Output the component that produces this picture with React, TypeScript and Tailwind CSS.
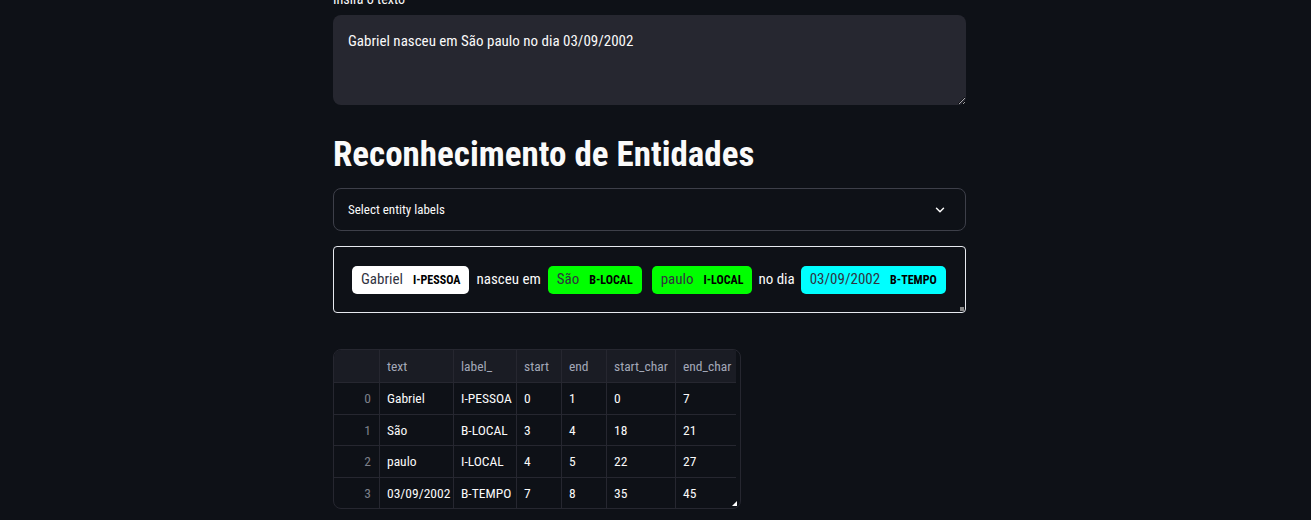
import { ChevronDown } from 'lucide-react';

const rows = [
  { i: 0, text: 'Gabriel', label: 'I-PESSOA', start: 0, end: 1, sc: 0, ec: 7 },
  { i: 1, text: 'São', label: 'B-LOCAL', start: 3, end: 4, sc: 18, ec: 21 },
  { i: 2, text: 'paulo', label: 'I-LOCAL', start: 4, end: 5, sc: 22, ec: 27 },
  { i: 3, text: '03/09/2002', label: 'B-TEMPO', start: 7, end: 8, sc: 35, ec: 45 },
];

function Mark({ text, label, color }: { text: string; label: string; color: string }) {
  return (
    <span className={`inline-flex h-[28px] shrink-0 items-center whitespace-nowrap rounded-[5px] px-[9px] ${color}`}>
      <span className="text-[15px] text-[#31333f]">{text}</span>
      <span className="ml-[10px] text-[12px] font-bold text-black">{label}</span>
    </span>
  );
}

export default function App() {
  const cols = ['w-[46px]', 'w-[74px]', 'w-[63px]', 'w-[45px]', 'w-[45px]', 'w-[69px]', 'w-[60px]'];

  return (
    <div className="h-[520px] overflow-hidden bg-[#0e1117] font-['Roboto_Condensed',sans-serif] text-[#fafafa]">
      <div className="mx-auto w-[645px] pr-[12px]">
        {/* text input */}
        <div className="-mt-[11px]">
          <div className="mb-[6px] text-[14px] leading-[20px]">Insira o texto</div>
          <textarea
            className="block h-[90px] w-full rounded-lg bg-[#262730] px-[15px] pt-[14px] text-[15px] leading-[24px] text-[#fafafa] outline-none"
            defaultValue="Gabriel nasceu em São paulo no dia 03/09/2002"
          />
        </div>

        <h2 className="mt-[28px] text-[35px] font-bold leading-[44px]">Reconhecimento de Entidades</h2>

        {/* select */}
        <div className="mt-[11px] flex h-[43px] items-center justify-between rounded-lg border border-[#3d3f49] pl-[14px] pr-[18px]">
          <span className="text-[13px]">Select entity labels</span>
          <ChevronDown className="h-[14px] w-[14px]" strokeWidth={2.5} />
        </div>

        {/* entities */}
        <div className="relative mt-[15px] flex h-[67px] items-center whitespace-nowrap rounded-[4px] border border-[#e6e9ef] pl-[18px] text-[15px]">
          <Mark text="Gabriel" label="I-PESSOA" color="bg-white" />
          <span className="mx-[7px]">nasceu em</span>
          <Mark text="São" label="B-LOCAL" color="bg-[#00ff00]" />
          <span className="ml-[10px]" />
          <Mark text="paulo" label="I-LOCAL" color="bg-[#00ff00]" />
          <span className="mx-[6px]">no dia</span>
          <Mark text="03/09/2002" label="B-TEMPO" color="bg-[#00ffff]" />
          <span className="absolute bottom-[1px] right-[1px] h-[4px] w-[4px] bg-[#888]" />
        </div>

        {/* dataframe */}
        <div className="relative mt-[36px] w-[408px] overflow-hidden whitespace-nowrap rounded-lg border border-[#262730] text-[13.5px]">
          <div className="flex h-[32px] text-[#a3a8b8]">
            {['', 'text', 'label_', 'start', 'end', 'start_char', 'end_char'].map((h, k) => (
              <div key={k} className={`${cols[k]} flex items-center border-r border-[#262730] bg-[#1a1c24] px-[7px] last:border-r-0`}>
                {h}
              </div>
            ))}
          </div>
          {rows.map((r) => (
            <div key={r.i} className="flex h-[31.5px]">
              <div className={`${cols[0]} flex items-center justify-end border-r border-t border-[#262730] px-[8px] text-[#7d808a]`}>{r.i}</div>
              {[r.text, r.label, r.start, r.end, r.sc, r.ec].map((v, k) => (
                <div key={k} className={`${cols[k + 1]} flex items-center border-r border-t border-[#262730] px-[7px] last:border-r-0`}>
                  {v}
                </div>
              ))}
            </div>
          ))}
          <div className="absolute bottom-[2px] right-[3px] h-0 w-0 border-b-[5px] border-l-[5px] border-b-white border-l-transparent" />
        </div>
      </div>
    </div>
  );
}
